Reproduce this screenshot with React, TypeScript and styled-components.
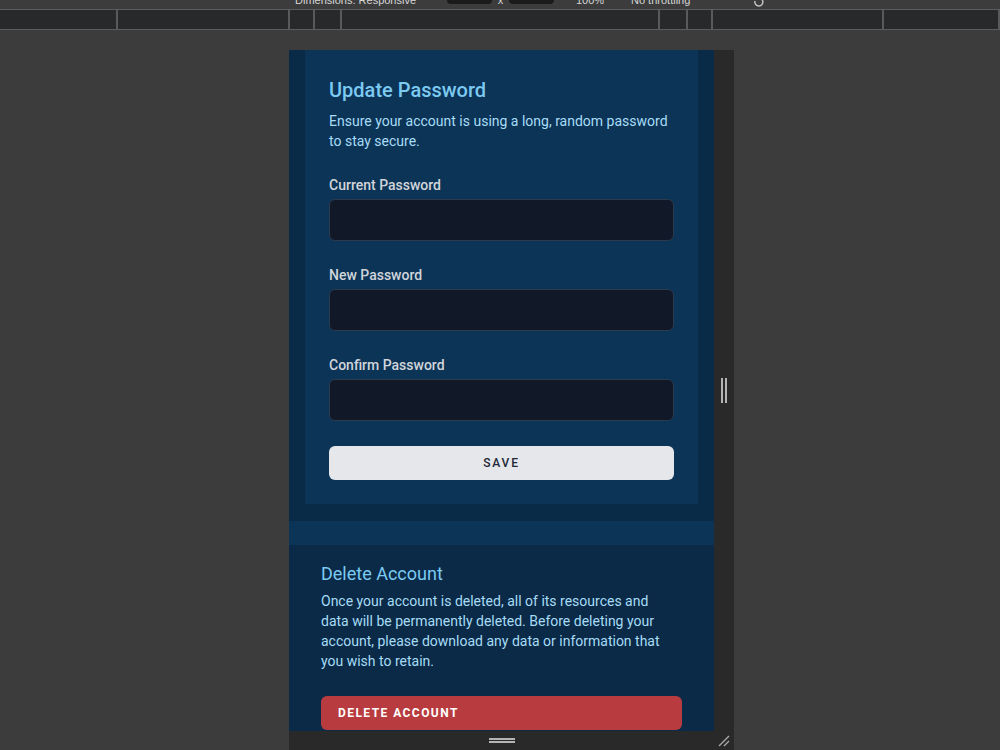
import React from "react";
import styled, { createGlobalStyle } from "styled-components";

const GlobalStyle = createGlobalStyle`
  html, body {
    margin: 0;
    padding: 0;
    background: #3c3c3c;
    font-family: Roboto, "Noto Sans", sans-serif;
    overflow: hidden;
  }
`;

const rulerStops = [118, 172, 25, 27, 318, 28, 25, 171, 116];

const App = () => {
  return (
    <>
      <GlobalStyle />
      <DevToolbar>
        <ToolSlot $width={152}>
          <ToolText>Dimensions: Responsive</ToolText>
        </ToolSlot>
        <SizeBox>425</SizeBox>
        <ToolSlot $width={17} $center>
          <ToolText>x</ToolText>
        </ToolSlot>
        <SizeBox>687</SizeBox>
        <ToolSlot $width={22} />
        <ToolSlot $width={55}>
          <ToolText>100%</ToolText>
        </ToolSlot>
        <ToolSlot $width={122}>
          <ToolText>No throttling</ToolText>
        </ToolSlot>
        <RotateIcon width="12" height="12" viewBox="0 0 12 12">
          <path d="M2 5a4 4 0 1 0 4-3" fill="none" stroke="#c8c8c8" strokeWidth="1.4" />
        </RotateIcon>
      </DevToolbar>
      <Ruler>
        {rulerStops.map((w, i) => (
          <RulerSegment key={i} $width={w} />
        ))}
      </Ruler>
      <Stage>
        <DeviceFrame>
          <Viewport>
            <Page>
              <OuterSection>
                <Card>
                  <Title>Update Password</Title>
                  <Description $gap={7}>
                    Ensure your account is using a long, random password to stay secure.
                  </Description>
                  <Form>
                    <Field>
                      <Label>Current Password</Label>
                      <Input type="password" />
                    </Field>
                    <Field>
                      <Label>New Password</Label>
                      <Input type="password" />
                    </Field>
                    <Field>
                      <Label>Confirm Password</Label>
                      <Input type="password" />
                    </Field>
                    <SaveButton>Save</SaveButton>
                  </Form>
                </Card>
              </OuterSection>
              <Band />
              <DeleteSection>
                <DeleteTitle>Delete Account</DeleteTitle>
                <Description $gap={4} $maxWidth={350}>
                  Once your account is deleted, all of its resources and data will be
                  permanently deleted. Before deleting your account, please download any
                  data or information that you wish to retain.
                </Description>
                <DangerButton>Delete Account</DangerButton>
              </DeleteSection>
            </Page>
          </Viewport>
          <SideHandle>
            <GripV />
          </SideHandle>
          <BottomHandle>
            <GripH />
          </BottomHandle>
          <Corner>
            <svg width="14" height="14" viewBox="0 0 14 14">
              <path d="M2 12L12 2M7 12L12 7" stroke="#a8a8a8" strokeWidth="1.4" />
            </svg>
          </Corner>
        </DeviceFrame>
      </Stage>
    </>
  );
};

const DevToolbar = styled.div`
  height: 9px;
  overflow: hidden;
  display: flex;
  align-items: flex-end;
  padding-left: 295px;
  background: #3c3c3c;
`;

const ToolSlot = styled.div<{ $width: number; $center?: boolean }>`
  width: ${(p) => p.$width}px;
  flex: none;
  display: flex;
  justify-content: ${(p) => (p.$center ? "center" : "flex-start")};
  margin-bottom: 2px;
`;

const ToolText = styled.span`
  font-family: "Liberation Sans", sans-serif;
  font-size: 11px;
  line-height: 14px;
  color: #d6d6d6;
  white-space: nowrap;
`;

const SizeBox = styled.span`
  width: 45px;
  height: 18px;
  flex: none;
  margin-bottom: 5px;
  border-radius: 4px;
  background: #1b1b1b;
  font-family: "Liberation Sans", sans-serif;
  font-size: 11px;
  line-height: 16px;
  color: #e8e8e8;
  padding-left: 6px;
  box-sizing: border-box;
`;

const RotateIcon = styled.svg`
  flex: none;
  margin-bottom: 1px;
`;

const Ruler = styled.div`
  display: flex;
  height: 19px;
  background: #28292b;
  border-top: 1px solid #5c5c5c;
  border-bottom: 1px solid #5c5c5c;
`;

const RulerSegment = styled.div<{ $width: number }>`
  width: ${(p) => p.$width}px;
  flex: none;
  box-sizing: border-box;
  border-right: 2px solid #5a5a5a;
`;

const Stage = styled.div`
  padding-top: 20px;
  padding-left: 289px;
`;

const DeviceFrame = styled.div`
  display: grid;
  grid-template-columns: 425px 20px;
  grid-template-rows: 681px 19px;
  width: 445px;
`;

const Viewport = styled.div`
  overflow: hidden;
  background: #0a2a47;
`;

const Page = styled.div`
  margin-top: -38px;
`;

const OuterSection = styled.div`
  background: #0a2b48;
  padding: 0 16px 17px;
`;

const Card = styled.div`
  background: #0c3457;
  padding: 64px 24px 24px;
`;

const Title = styled.h2`
  margin: 0;
  font-size: 20px;
  line-height: 28px;
  font-weight: 500;
  color: #7ccaf2;
`;

const Description = styled.p<{ $gap: number; $maxWidth?: number }>`
  margin: ${(p) => p.$gap}px 0 0;
  max-width: ${(p) => (p.$maxWidth ? `${p.$maxWidth}px` : "none")};
  font-size: 14px;
  line-height: 20px;
  color: #a7dcf6;
`;

const Form = styled.div`
  display: flex;
  flex-direction: column;
  gap: 24px;
  margin-top: 24px;
`;

const Field = styled.label`
  display: flex;
  flex-direction: column;
  gap: 4px;
`;

const Label = styled.span`
  font-size: 14px;
  line-height: 20px;
  font-weight: 500;
  color: #d1d5db;
`;

const Input = styled.input`
  height: 42px;
  box-sizing: border-box;
  border: 1px solid #2c3a4e;
  border-radius: 6px;
  background: #111827;
  outline: none;
`;

const SaveButton = styled.button`
  margin-top: 1px;
  height: 34px;
  border: none;
  border-radius: 6px;
  background: #e5e7eb;
  color: #1f2937;
  font-family: inherit;
  font-size: 12px;
  font-weight: 500;
  letter-spacing: 0.15em;
  text-transform: uppercase;
`;

const Band = styled.div`
  height: 24px;
  background: #0c3457;
`;

const DeleteSection = styled.div`
  background: #0a2a47;
  padding: 16px 32px 24px;
`;

const DeleteTitle = styled.h3`
  margin: 0;
  font-size: 18px;
  line-height: 26px;
  font-weight: 400;
  color: #7ccaf2;
`;

const DangerButton = styled.button`
  display: block;
  width: 100%;
  margin-top: 25px;
  height: 34px;
  border: none;
  border-radius: 6px;
  background: #b83c3f;
  color: #ffffff;
  font-family: inherit;
  font-size: 12px;
  font-weight: 700;
  letter-spacing: 0.12em;
  text-transform: uppercase;
  text-align: left;
  padding-left: 17px;
`;

const SideHandle = styled.div`
  background: #29292a;
  display: flex;
  align-items: center;
  justify-content: center;
`;

const GripV = styled.div`
  width: 6px;
  height: 25px;
  box-sizing: border-box;
  border-left: 2px solid #b4b4b4;
  border-right: 2px solid #b4b4b4;
`;

const BottomHandle = styled.div`
  background: #29292a;
  display: flex;
  align-items: center;
  justify-content: center;
`;

const GripH = styled.div`
  width: 26px;
  height: 5px;
  box-sizing: border-box;
  border-top: 2px solid #b4b4b4;
  border-bottom: 2px solid #b4b4b4;
`;

const Corner = styled.div`
  background: #29292a;
  display: flex;
  align-items: center;
  justify-content: center;
`;

export default App;
